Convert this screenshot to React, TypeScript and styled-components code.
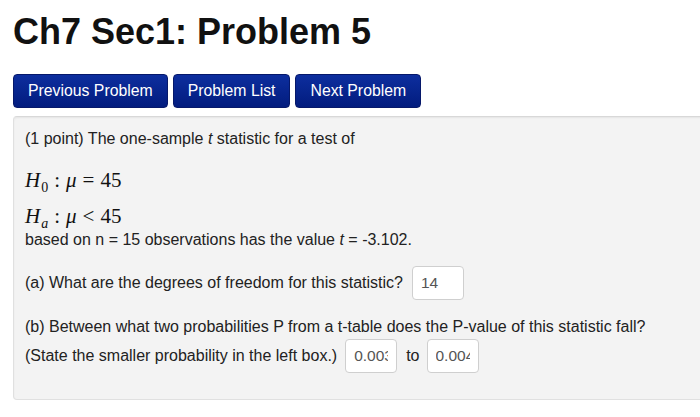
import React from "react";
import styled, { createGlobalStyle } from "styled-components";

const Global = createGlobalStyle`
  html, body { margin: 0; padding: 0; background: #fff; overflow: hidden; }
  body { font-family: "Liberation Sans", Arial, sans-serif; color: #222; }
`;

const Page = styled.div`
  padding: 0 0 0 13px;
  width: 720px;
`;

const Title = styled.h1`
  margin: 0;
  padding-top: 14px;
  font-size: 36px;
  line-height: 36px;
  font-weight: bold;
  color: #111;
`;

const Nav = styled.div`
  display: flex;
  gap: 5px;
  margin-top: 24px;
`;

const NavButton = styled.button`
  height: 34px;
  padding: 0 14px;
  border: 1px solid #06186a;
  border-radius: 4px;
  background: linear-gradient(#0d2e9e, #021c7e);
  color: #fff;
  font-family: "Liberation Sans", Arial, sans-serif;
  font-size: 15.8px;
`;

const Panel = styled.section`
  margin-top: 8px;
  background: #f3f3f3;
  border: 1px solid #e0e0e0;
  border-top-color: #d8d8d8;
  border-radius: 4px;
  box-shadow: inset 0 1px 2px rgba(0, 0, 0, 0.06);
  padding: 12px 11px 26px;
  font-size: 16px;
`;

const Line = styled.div<{ $top?: number; $tall?: boolean }>`
  display: flex;
  align-items: center;
  margin-top: ${(p) => p.$top ?? 0}px;
  min-height: ${(p) => (p.$tall ? 34 : 20)}px;
  line-height: 20px;
`;

const Math = styled.div<{ $top: number }>`
  margin-top: ${(p) => p.$top}px;
  height: 24px;
  line-height: 24px;
  font-family: "Liberation Serif", "Times New Roman", serif;
  font-size: 21px;
  color: #111;
  i { font-style: italic; }
  sub { font-size: 14px; vertical-align: -5px; line-height: 0; margin-left: 1px; }
`;

const Op = styled.span`
  margin: 0 6px;
`;

const Answer = styled.input`
  box-sizing: border-box;
  width: 52px;
  height: 34px;
  padding: 0 8px;
  border: 1px solid #cfcfcf;
  border-radius: 4px;
  background: #fff;
  color: #555;
  font-family: "Liberation Sans", Arial, sans-serif;
  font-size: 15.5px;
`;

const Gap = styled.span<{ $w: number }>`
  display: inline-block;
  width: ${(p) => p.$w}px;
`;

export default function App() {
  return (
    <Page>
      <Global />
      <Title>Ch7 Sec1: Problem 5</Title>
      <Nav>
        <NavButton>Previous Problem</NavButton>
        <NavButton>Problem List</NavButton>
        <NavButton>Next Problem</NavButton>
      </Nav>
      <Panel>
        <Line>
          (1 point) The one-sample&nbsp;<i>t</i>&nbsp;statistic for a test of
        </Line>
        <Math $top={19}>
          <i>H</i><sub>0</sub><Op>:</Op><i>μ</i><Op>=</Op>45
        </Math>
        <Math $top={12}>
          <i>H</i><sub><i>a</i></sub><Op>:</Op><i>μ</i><Op>&lt;</Op>45
        </Math>
        <Line $top={2}>
          based on n = 15 observations has the value&nbsp;<i>t</i>&nbsp;= -3.102.
        </Line>
        <Line $top={16} $tall>
          (a) What are the degrees of freedom for this statistic?
          <Gap $w={9} />
          <Answer readOnly value="14" />
        </Line>
        <Line $top={17}>
          (b) Between what two probabilities P from a t-table does the P-value of this statistic fall?
        </Line>
        <Line $top={2} $tall>
          (State the smaller probability in the left box.)
          <Gap $w={8} />
          <Answer readOnly value="0.003" />
          <Gap $w={9} />
          to
          <Gap $w={7} />
          <Answer readOnly value="0.004" />
        </Line>
      </Panel>
    </Page>
  );
}
